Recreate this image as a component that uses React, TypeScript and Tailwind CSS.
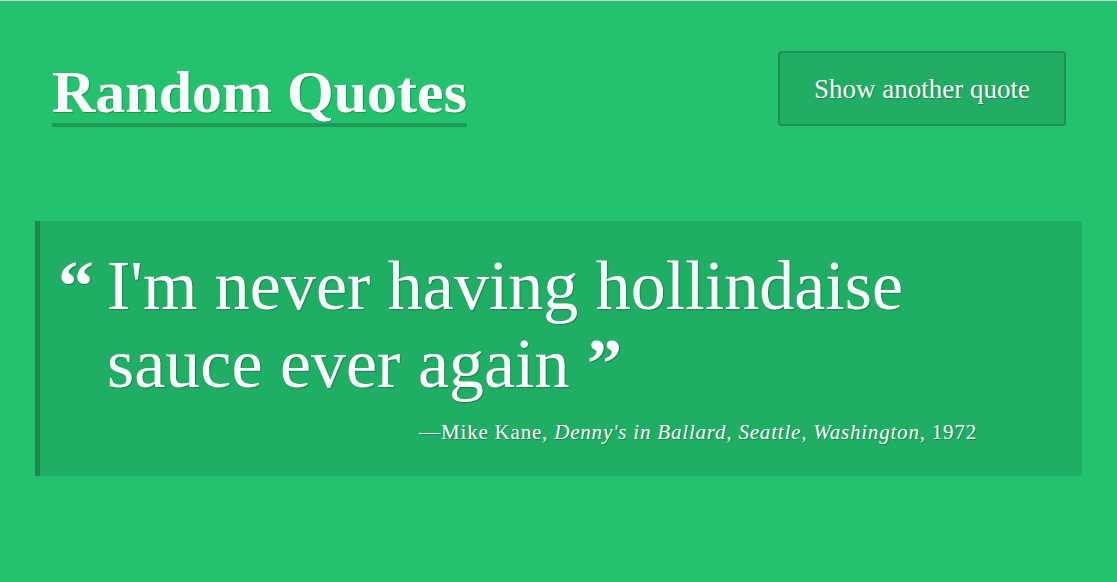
import React from "react";

export default function App() {
  const shadow = "[text-shadow:1px_1px_1px_rgba(0,0,0,0.25)]";
  return (
    <div className="min-h-[582px] w-full bg-[#24c26f] border-t border-[#cfcfcf] text-white" style={{ fontFamily: '"Liberation Serif", serif' }}>
      <header className="flex justify-between items-start pl-[52px] pr-[51px] pt-[50px]">
        <h1 className={`text-[60px] font-bold leading-[62px] border-b-4 border-[#1e9a57] pb-0 mt-[10px] ${shadow}`}>
          Random Quotes
        </h1>
        <button className={`w-[288px] h-[75px] rounded-[4px] border-2 border-[#1c8e50] bg-[#21ad65] text-[27px] pt-[2px] text-white ${shadow}`}>
          Show another quote
        </button>
      </header>
      <main className="mx-[35px] mt-[94px]">
        <blockquote className="border-l-[5px] border-[#1a8a4f] bg-[#20ad66] rounded-r-[4px] pl-[18px] pr-[105px] pt-[26px] pb-[27px]">
          <div className="flex">
            <span className={`text-[72px] font-bold leading-[78px] w-[49px] shrink-0 ${shadow}`}>“</span>
            <p className={`text-[70px] leading-[78px] ${shadow}`}>
              I'm never having hollindaise sauce ever again <span className="font-bold">”</span>
            </p>
          </div>
          <p className={`text-right text-[21px] tracking-[0.8px] mt-[14px] ${shadow}`}>
            —Mike Kane, <i>Denny's in Ballard, Seattle, Washington</i>, 1972
          </p>
        </blockquote>
      </main>
    </div>
  );
}
